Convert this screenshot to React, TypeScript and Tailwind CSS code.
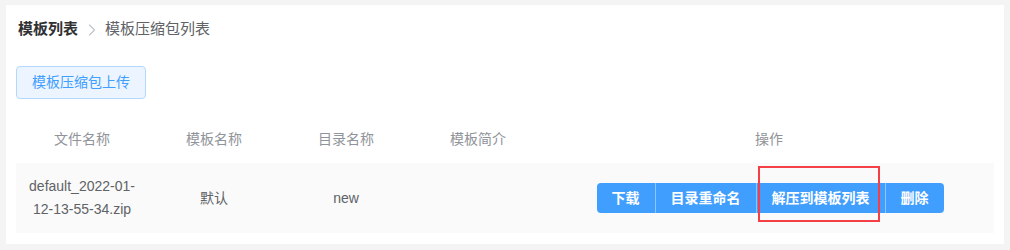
import React from 'react';
import { ChevronRight } from 'lucide-react';

const font = { fontFamily: '"Liberation Sans", Arial, "Noto Sans CJK SC", sans-serif' };

const columns = ['文件名称', '模板名称', '目录名称', '模板简介'];

const actions = ['下载', '目录重命名', '解压到模板列表', '删除'];

export default function App() {
    return (
        <div className="w-[1010px] h-[250px] bg-[#f4f4f4] pt-[5px] px-[6px]" style={font}>
            <div className="relative bg-white px-[10px] pt-[10px] pb-[11px]">
                {/* Breadcrumb */}
                <div className="h-[29px] flex items-center pl-[2px] text-[15px]">
                    <span className="font-bold text-[#303133]">模板列表</span>
                    <ChevronRight className="w-[20px] h-[20px] ml-[4px] mr-[3px] text-[#c0c4cc]" strokeWidth={1.4} />
                    <span className="text-[#606266]">模板压缩包列表</span>
                </div>

                {/* Upload */}
                <div className="mt-[22px]">
                    <button className="w-[130px] h-[33px] bg-[#ecf5ff] border border-[#b3d8ff] text-[#409eff] text-[14px] rounded-[4px]">
                        模板压缩包上传
                    </button>
                </div>

                {/* Table */}
                <div className="mt-[17px] text-[14px]">
                    <div className="flex h-[47px] items-center text-[#909399]">
                        {columns.map(c => (
                            <div key={c} className="w-[132px] text-center">{c}</div>
                        ))}
                        <div className="flex-1 text-center">操作</div>
                    </div>
                    <div className="flex h-[70px] items-center bg-[#fafafa] text-[#606266] leading-[23px]">
                        <div className="w-[132px] px-[10px] text-center">default_2022-01-12-13-55-34.zip</div>
                        <div className="w-[132px] text-center">默认</div>
                        <div className="w-[132px] text-center">new</div>
                        <div className="w-[132px] text-center"></div>
                        <div className="flex-1 flex justify-center pl-[2px]">
                            <div className="flex h-[30px] rounded-[4px] overflow-hidden bg-[#409eff]">
                                {actions.map((a, i) => (
                                    <button
                                        key={a}
                                        className={`h-full px-[15px] text-white font-bold text-[14px] ${i > 0 ? 'border-l border-[#8cc5ff]' : ''}`}
                                    >
                                        {a}
                                    </button>
                                ))}
                            </div>
                        </div>
                    </div>
                </div>

                {/* Annotation */}
                <div className="absolute left-[752px] top-[161px] w-[122px] h-[56px] border-2 border-[#f43f46] pointer-events-none" />
            </div>
        </div>
    );
}
